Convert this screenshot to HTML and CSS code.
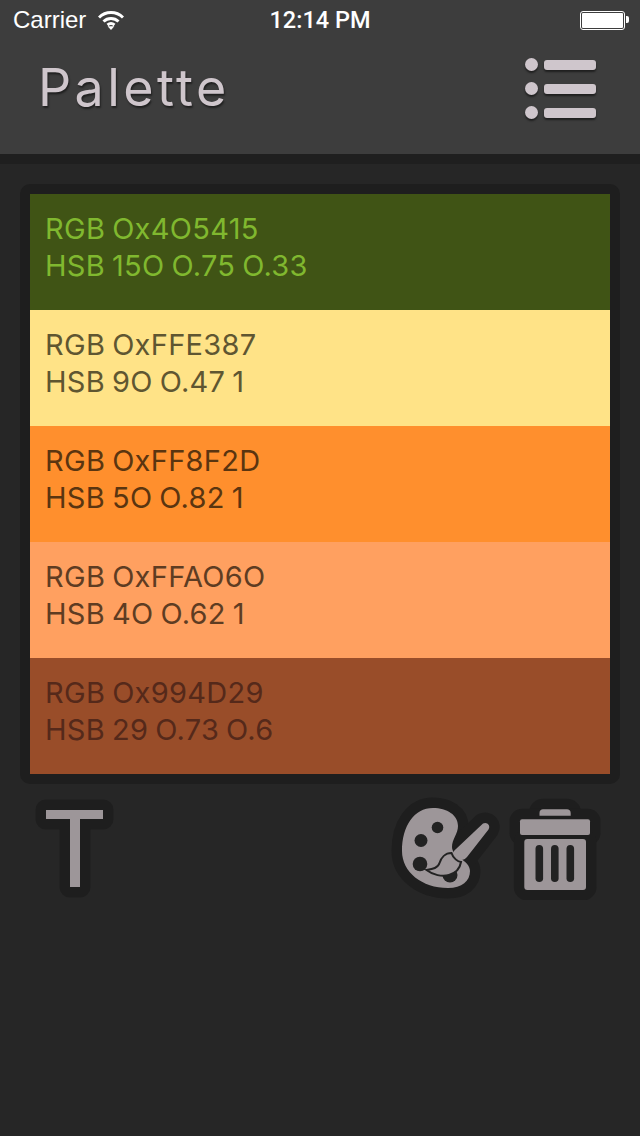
FILE: index.html
```html
<!DOCTYPE html>
<html lang="en">
<head>
    <meta charset="UTF-8">
    <meta name="viewport" content="width=device-width, initial-scale=1.0">
    <title>Palette</title>
    <link rel="stylesheet" href="styles.css">
</head>
<body>
    <header class="top">
        <div class="status-bar">
            <div class="status-left">
                <span>Carrier</span>
                <svg class="wifi" viewBox="0 0 26 20" width="26" height="20">
                    <path d="M1 7.5 A17 17 0 0 1 25 7.5" />
                    <path d="M5.5 11.5 A11 11 0 0 1 20.5 11.5" />
                    <path d="M9.5 15 A5.5 5.5 0 0 1 16.5 15" />
                    <polygon class="wifi-tip" points="13,20 9.6,16.2 16.4,16.2" />
                </svg>
            </div>
            <div class="status-time">12:14 PM</div>
            <div class="battery"><div class="battery-fill"></div></div>
        </div>
        <div class="title-row">
            <h1>Palette</h1>
            <div class="menu-icon">
                <div class="menu-line"><span class="menu-dot"></span><span class="menu-bar"></span></div>
                <div class="menu-line"><span class="menu-dot"></span><span class="menu-bar"></span></div>
                <div class="menu-line"><span class="menu-dot"></span><span class="menu-bar"></span></div>
            </div>
        </div>
    </header>
    <div class="header-edge"></div>

    <main class="content">
        <div class="swatches">
            <div class="swatch swatch-green">
                <p>RGB Ox4O5415</p>
                <p>HSB 15O O.75 O.33</p>
            </div>
            <div class="swatch swatch-yellow">
                <p>RGB OxFFE387</p>
                <p>HSB 9O O.47 1</p>
            </div>
            <div class="swatch swatch-orange">
                <p>RGB OxFF8F2D</p>
                <p>HSB 5O O.82 1</p>
            </div>
            <div class="swatch swatch-peach">
                <p>RGB OxFFAO6O</p>
                <p>HSB 4O O.62 1</p>
            </div>
            <div class="swatch swatch-brown">
                <p>RGB Ox994D29</p>
                <p>HSB 29 O.73 O.6</p>
            </div>
        </div>

        <div class="tools">
            <svg class="tool tool-text" viewBox="30 795 90 105" width="90" height="105">
                <defs>
                    <path id="t-shape" d="M46 810 H103 V819 H80 V887 H70 V819 H46 Z" />
                </defs>
                <use href="#t-shape" class="halo" />
                <use href="#t-shape" class="ink" />
            </svg>
            <div class="tools-right">
                <svg class="tool" viewBox="385 795 120 105" width="120" height="105">
                    <defs>
                        <g id="palette-shape">
                            <path d="M433 808 C447 808 458 815 458 826 C458 834 452 839 452 847 C452 857 470 860 470 871 C470 881 462 888 448 888 C422 888 402 872 402 851 C402 826 414 808 433 808 Z" />
                            <path d="M483 823.5 C487 821.5 491 825.5 488.500 829.500 L467 857 C464 861 459 860.500 456 858 C453 855.500 452.500 851.500 456 849 Z" />
                        </g>
                    </defs>
                    <use href="#palette-shape" class="halo" />
                    <use href="#palette-shape" class="ink" />
                    <circle class="hole" cx="437.500" cy="827.500" r="5.800" />
                    <circle class="hole" cx="421" cy="840.500" r="6.500" />
                    <circle class="hole" cx="420" cy="864" r="7.300" />
                    <circle class="hole" cx="450" cy="875" r="7.500" />
                    <path class="brush-head" d="M451.500 853 C445 853 441 858 439.500 863 C438 868 433 869 426.500 870 C433 875 442 877 449 875 C456 873 460 868 461 862 C458 862 453 858 451.500 853 Z" />
                </svg>
                <svg class="tool" viewBox="505 795 100 105" width="100" height="105">
                    <defs>
                        <g id="trash-shape">
                            <path d="M539.500 815.700 V813 C539.500 810.500 541 809.300 543 809.300 H567 C569 809.300 570.700 810.500 570.700 813 V815.700 Z" />
                            <rect x="520" y="819.300" width="70" height="15.700" rx="2" />
                            <rect x="524.300" y="839" width="61.700" height="51" rx="3" />
                        </g>
                    </defs>
                    <use href="#trash-shape" class="halo" />
                    <use href="#trash-shape" class="ink" />
                    <rect class="hole" x="535.500" y="845" width="7.600" height="37" rx="3.800" />
                    <rect class="hole" x="551" y="845" width="7.600" height="37" rx="3.800" />
                    <rect class="hole" x="566.500" y="845" width="7.600" height="37" rx="3.800" />
                </svg>
            </div>
        </div>
    </main>
</body>
</html>
```

FILE: styles.css
```css
html, body {
    margin: 0;
    padding: 0;
}

body {
    width: 640px;
    height: 1136px;
    overflow: hidden;
    background: #262626;
    font-family: Inter, Lato, sans-serif;
}

.top {
    height: 154px;
    background: #3d3d3d;
}

.header-edge {
    height: 10px;
    background: #1f1f1f;
}

/* status bar */
.status-bar {
    height: 40px;
    position: relative;
    display: flex;
    align-items: center;
    justify-content: space-between;
    padding: 0 15px 0 13px;
    font-family: "Liberation Sans", sans-serif;
    font-size: 24px;
    color: #fff;
}

.status-left {
    display: flex;
    align-items: center;
    gap: 12px;
}

.wifi {
    fill: none;
    stroke: #fff;
    stroke-width: 3;
}

.wifi-tip {
    fill: #fff;
    stroke: none;
}

.status-time {
    position: absolute;
    left: 0;
    right: 0;
    text-align: center;
    font-family: Roboto, sans-serif;
    font-weight: 500;
    font-size: 23.500px;
}

.battery {
    width: 45px;
    height: 19px;
    box-sizing: border-box;
    border: 1px solid #fff;
    border-radius: 3px;
    padding: 1px;
    position: relative;
}

.battery::after {
    content: "";
    position: absolute;
    left: 45px;
    top: 4px;
    width: 3px;
    height: 7px;
    background: #fff;
    border-radius: 0 2px 2px 0;
}

.battery-fill {
    height: 100%;
    background: #fff;
    border-radius: 1px;
}

/* title row */
.title-row {
    height: 114px;
    display: flex;
    justify-content: space-between;
    padding: 0 44px 0 38px;
}

h1 {
    margin: 0;
    padding-top: 13px;
    font-size: 52px;
    line-height: 70px;
    font-weight: 400;
    letter-spacing: 3.400px;
    color: #cfc6cc;
    text-shadow: 1px 2px 2px rgba(0, 0, 0, 0.5);
}

.menu-icon {
    display: flex;
    flex-direction: column;
    gap: 11px;
    padding-top: 18px;
}

.menu-line {
    height: 13px;
    display: flex;
    align-items: center;
    gap: 6px;
}

.menu-dot {
    width: 13px;
    height: 13px;
    border-radius: 50%;
    background: #cfc6cc;
    box-shadow: 0 2px 2px rgba(0, 0, 0, 0.5);
}

.menu-bar {
    width: 52px;
    height: 10px;
    border-radius: 3px;
    background: #cfc6cc;
    box-shadow: 0 2px 2px rgba(0, 0, 0, 0.5);
}

/* swatch card */
.content {
    padding: 20px 20px 0;
}

.swatches {
    padding: 10px;
    background: #1e1e1e;
    border-radius: 10px;
}

.swatch {
    height: 116px;
    box-sizing: border-box;
    padding: 16px 15px 0;
    font-size: 29px;
    font-weight: 400;
    line-height: 37px;
    letter-spacing: 0.300px;
    word-spacing: -1.500px;
}

.swatch p {
    margin: 0;
}

.swatch-green { background: #405415; color: #80b82f; }
.swatch-yellow { background: #ffe387; color: #5f5631; }
.swatch-orange { background: #ff8f2d; color: #5a3510; }
.swatch-peach { background: #ffa060; color: #5e3c22; }
.swatch-brown { background: #994d29; color: #55291a; }

/* tools under the card */
.tools {
    display: flex;
    justify-content: space-between;
    margin: 11px 15px 0 10px;
}

.tools-right {
    display: flex;
}

.tool {
    display: block;
}

.halo {
    fill: #1e1e1e;
    stroke: #1e1e1e;
    stroke-width: 21;
    stroke-linejoin: round;
}

.ink {
    fill: #9d9699;
}

.hole {
    fill: #222;
}

.brush-head {
    fill: #9d9699;
    stroke: #222;
    stroke-width: 2;
}
```
